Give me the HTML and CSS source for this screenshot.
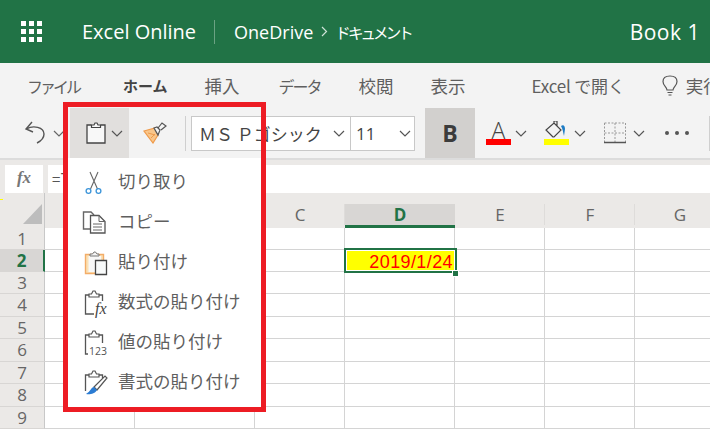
FILE: index.html
```html
<!DOCTYPE html>
<html lang="ja">
<head>
  <meta charset="UTF-8" />
  <title>Excel Online</title>
  <link rel="stylesheet" href="styles.css">
</head>
<body>
<div class="app">
  <header class="topbar">
    <div class="waffle">
      <i></i><i></i><i></i><i></i><i></i><i></i><i></i><i></i><i></i>
    </div>
    <span class="brand">Excel Online</span>
    <span class="top-sep"></span>
    <span class="crumb">OneDrive</span>
    <svg class="crumb-arrow" width="7" height="11" viewBox="0 0 7 11"><path d="M1 1l4.500 4.500L1 10" fill="none" stroke="#cfe3d8" stroke-width="1.200"/></svg>
    <span class="crumb crumb-jp">ドキュメント</span>
    <span class="book">Book 1</span>
  </header>

  <nav class="tabs">
    <span class="tab tab-file">ファイル</span>
    <span class="tab tab-home">ホーム</span>
    <span class="tab tab-insert">挿入</span>
    <span class="tab tab-data">データ</span>
    <span class="tab tab-review">校閲</span>
    <span class="tab tab-view">表示</span>
    <span class="tab tab-open">Excel で開く</span>
    <svg class="bulb" width="16" height="22" viewBox="0 0 16 22"><path d="M5 15c0-3-4-4-4-8.500C1 3 4 1 8 1s7 2 7 5.500C15 11 11 12 11 15zM5.500 17.500h5M6.500 20h3" fill="none" stroke="#555" stroke-width="1.200"/></svg>
    <span class="tab tab-tell">実行</span>
  </nav>

  <div class="toolbar">
    <svg class="undo" width="22" height="24" viewBox="0 0 22 24"><path d="M8 1L2 8l7 3M2.500 8C9 4 20 6 20 13c0 4-3 7-7 9" fill="none" stroke="#555" stroke-width="1.400"/></svg>
    <svg class="chev chev-undo" width="12" height="7" viewBox="0 0 12 7"><path d="M1 1l5 5 5-5" fill="none" stroke="#666" stroke-width="1.200"/></svg>
    <div class="paste-btn">
      <svg width="20" height="22" viewBox="0 0 20 22"><path d="M5.500 3H1v18h18V3h-4.500" fill="#f8f8f8" stroke="#444" stroke-width="1.300"/><path d="M5.500 5.500V3H8l1-2h2l1 2h2.500v2.500z" fill="#f8f8f8" stroke="#444" stroke-width="1.200"/></svg>
      <svg class="chev" width="12" height="7" viewBox="0 0 12 7"><path d="M1 1l5 5 5-5" fill="none" stroke="#555" stroke-width="1.200"/></svg>
    </div>
    <svg class="brush" width="24" height="22" viewBox="0 0 24 22"><path d="M1 9l11-3 3 7-5 8z" fill="#f9c68a" stroke="#ef9a4a" stroke-width="1.200"/><path d="M5 11l7 2M8 16l4-4" stroke="#ef9a4a" fill="none"/><path d="M11 6l3-1 3 3-2 5zM15 6l4-5 4 3-5 4" fill="#f4f4f4" stroke="#555" stroke-width="1.200"/></svg>
    <span class="tool-sep"></span>
    <div class="select select-font">
      <span>ＭＳ Ｐゴシック</span>
      <svg class="chev" width="12" height="7" viewBox="0 0 12 7"><path d="M1 1l5 5 5-5" fill="none" stroke="#555" stroke-width="1.200"/></svg>
    </div>
    <div class="select select-size">
      <span>11</span>
      <svg class="chev" width="12" height="7" viewBox="0 0 12 7"><path d="M1 1l5 5 5-5" fill="none" stroke="#555" stroke-width="1.200"/></svg>
    </div>
    <div class="bold-btn">B</div>
    <div class="color-tool color-font">
      <span class="letter-a">A</span>
      <span class="swatch swatch-red"></span>
    </div>
    <svg class="chev chev-font" width="12" height="7" viewBox="0 0 12 7"><path d="M1 1l5 5 5-5" fill="none" stroke="#555" stroke-width="1.200"/></svg>
    <div class="color-tool color-fill">
      <svg width="25" height="18" viewBox="0 0 25 18"><path d="M9 16L2 9l8-7 7 7-7 7zM10 2V0h3v6" fill="none" stroke="#444" stroke-width="1.200"/><path d="M17 5c3-2 4 1 4 3l-1 7c-1-3-1-7-3-10z" fill="#1e7cc4"/></svg>
      <span class="swatch swatch-yellow"></span>
    </div>
    <svg class="chev chev-fill" width="12" height="7" viewBox="0 0 12 7"><path d="M1 1l5 5 5-5" fill="none" stroke="#555" stroke-width="1.200"/></svg>
    <svg class="borders" width="22" height="22" viewBox="0 0 22 22"><path d="M.5 1h21M.5 1v19M21.500 1v19M11 1v19M.5 11h21" fill="none" stroke="#999" stroke-dasharray="2 1.500"/><path d="M0 20.500h22" stroke="#555" stroke-width="1.500"/></svg>
    <svg class="chev chev-borders" width="12" height="7" viewBox="0 0 12 7"><path d="M1 1l5 5 5-5" fill="none" stroke="#555" stroke-width="1.200"/></svg>
    <div class="more"><i></i><i></i><i></i></div>
    <span class="tool-sep tool-sep-end"></span>
  </div>

  <div class="formula-bar">
    <div class="fx-box">fx</div>
    <div class="formula-input">=下</div>
  </div>

  <div class="sheet">
    <div class="corner"><span class="corner-mark"></span></div>
    <div class="col-head"></div><div class="col-head"></div><div class="col-head">C</div><div class="col-head col-on">D</div><div class="col-head">E</div><div class="col-head">F</div><div class="col-head">G</div>

    <div class="row-head">1</div>
    <div class="cell"></div><div class="cell"></div><div class="cell"></div><div class="cell"></div><div class="cell"></div><div class="cell"></div><div class="cell"></div>
    <div class="row-head row-on">2</div>
    <div class="cell"></div><div class="cell"></div><div class="cell"></div>
    <div class="cell cell-active"><div class="cell-value">2019/1/24</div><span class="fill-handle"></span></div>
    <div class="cell"></div><div class="cell"></div><div class="cell"></div>
    <div class="row-head">3</div>
    <div class="cell"></div><div class="cell"></div><div class="cell"></div><div class="cell"></div><div class="cell"></div><div class="cell"></div><div class="cell"></div>
    <div class="row-head">4</div>
    <div class="cell"></div><div class="cell"></div><div class="cell"></div><div class="cell"></div><div class="cell"></div><div class="cell"></div><div class="cell"></div>
    <div class="row-head">5</div>
    <div class="cell"></div><div class="cell"></div><div class="cell"></div><div class="cell"></div><div class="cell"></div><div class="cell"></div><div class="cell"></div>
    <div class="row-head">6</div>
    <div class="cell"></div><div class="cell"></div><div class="cell"></div><div class="cell"></div><div class="cell"></div><div class="cell"></div><div class="cell"></div>
    <div class="row-head">7</div>
    <div class="cell"></div><div class="cell"></div><div class="cell"></div><div class="cell"></div><div class="cell"></div><div class="cell"></div><div class="cell"></div>
    <div class="row-head">8</div>
    <div class="cell"></div><div class="cell"></div><div class="cell"></div><div class="cell"></div><div class="cell"></div><div class="cell"></div><div class="cell"></div>
    <div class="row-head">9</div>
    <div class="cell"></div><div class="cell"></div><div class="cell"></div><div class="cell"></div><div class="cell"></div><div class="cell"></div><div class="cell"></div>
  </div>

  <div class="paste-menu">
    <div class="menu-item">
      <svg width="28" height="34" viewBox="0 -3 28 34"><path d="M10 5l7.500 17M18 5l-7.500 17" fill="none" stroke="#666" stroke-width="1.100"/><circle cx="8.500" cy="24" r="2.400" fill="none" stroke="#3b94d9" stroke-width="1.300"/><circle cx="18.500" cy="24" r="2.400" fill="none" stroke="#3b94d9" stroke-width="1.300"/></svg>
      <span>切り取り</span>
    </div>
    <div class="menu-item">
      <svg width="28" height="34" viewBox="0 -3 28 34"><path d="M10 22H3.500V5H11l3 3" fill="none" stroke="#666" stroke-width="1.400"/><path d="M10.500 8.500H19l6 6V26H10.500z" fill="#fff" stroke="#555" stroke-width="1.300"/><path d="M19 8.500v6h6M13 17h9M13 20h9M13 23h9" fill="none" stroke="#666"/></svg>
      <span>コピー</span>
    </div>
    <div class="menu-item">
      <svg width="28" height="34" viewBox="0 -3 28 34"><path d="M5.500 7.500h18v19h-18z" fill="#fbe1b5" stroke="#f3ad68" stroke-width="1.400"/><path d="M8.500 9V25h7V13H21V9z" fill="#f8f8f8"/><path d="M10 9V7h2.500l1.500-2h1.500l1.500 2H19v2z" fill="#f4f4f4" stroke="#777"/><path d="M15.500 13.500h11v14h-11z" fill="#f8fafa" stroke="#444" stroke-width="1.300"/></svg>
      <span>貼り付け</span>
    </div>
    <div class="menu-item">
      <svg width="28" height="34" viewBox="0 -3 28 34"><path d="M9 8H5.500v19H14M19 8h3.500v6" fill="none" stroke="#555" stroke-width="1.300"/><path d="M9 10V7h2.500L13 4h2l1.500 3H19v3z" fill="#fff" stroke="#555" stroke-width="1.200"/><text class="icon-fx" x="15" y="27">fx</text></svg>
      <span>数式の貼り付け</span>
    </div>
    <div class="menu-item">
      <svg width="28" height="34" viewBox="0 -3 28 34"><path d="M9 8H5.500v19H8M19 8h3.500v8" fill="none" stroke="#555" stroke-width="1.300"/><path d="M9 10V7h2.500L13 4h2l1.500 3H19v3z" fill="#fff" stroke="#555" stroke-width="1.200"/><text class="icon-num" x="9" y="28">123</text></svg>
      <span>値の貼り付け</span>
    </div>
    <div class="menu-item">
      <svg width="28" height="34" viewBox="0 -3 28 34"><path d="M9 8H5.500v16M19 8h3.500v3" fill="none" stroke="#555" stroke-width="1.300"/><path d="M9 10V7h2.500L13 4h2l1.500 3H19v3z" fill="#fff" stroke="#555" stroke-width="1.200"/><path d="M14 20L25 9l2 2-10 12z" fill="#fff" stroke="#555" stroke-width="1.200"/><path d="M6 27c3 1 9 0 11-4l-3-3c-3 0-3 4-8 7z" fill="#2b7cd3"/></svg>
      <span>書式の貼り付け</span>
    </div>
  </div>
  <div class="red-frame"></div>
  <span class="stray-mark"></span>
</div>
</body>
</html>
```

FILE: styles.css
```css
* {
  box-sizing: border-box;
}

body {
  margin: 0;
  font-family: "Noto Sans CJK JP", sans-serif;
  color: #555;
}

.app {
  position: relative;
  width: 710px;
  height: 429px;
  overflow: hidden;
  background: #fff;
}

/* green title bar */
.topbar {
  display: flex;
  align-items: center;
  height: 63px;
  padding-left: 21px;
  background: #217346;
  color: #fff;
  font-family: "Open Sans", "Noto Sans CJK JP", sans-serif;
}

.waffle {
  display: grid;
  grid-template-columns: repeat(3, 5px);
  grid-auto-rows: 5px;
  gap: 3px;
  margin-right: 40px;
}

.waffle i {
  background: #fff;
}

.brand {
  font-size: 20px;
}

.top-sep {
  width: 1px;
  height: 24px;
  margin: 0 19px 0 18px;
  background: #6ba283;
}

.crumb {
  font-size: 18px;
}

.crumb-arrow {
  margin: 0 7px 0 8px;
}

.crumb-jp {
  font-family: "Noto Sans CJK JP", sans-serif;
  font-size: 15.500px;
  letter-spacing: -2.900px;
}

.book {
  margin-left: auto;
  margin-right: 10px;
  font-size: 21px;
  letter-spacing: 0.5px;
}

/* ribbon tabs */
.tabs {
  display: flex;
  align-items: center;
  height: 45px;
  background: #f3f3f3;
  font-size: 17.500px;
  white-space: nowrap;
  overflow: hidden;
}

.tab {
  flex: none;
  color: #5f5f5f;
}

.tab-file {
  margin-left: 27px;
  font-size: 16px;
  letter-spacing: -3px;
}

.tab-home {
  margin-left: 44px;
  font-size: 15px;
  font-weight: 700;
  color: #444;
}

.tab-insert {
  margin-left: 37px;
}

.tab-data {
  margin-left: 39px;
  font-size: 16px;
  letter-spacing: -2px;
}

.tab-review {
  margin-left: 38px;
}

.tab-view {
  margin-left: 37px;
}

.tab-open {
  margin-left: 66px;
  font-size: 17px;
  letter-spacing: -0.2px;
}

.bulb {
  flex: none;
  margin-left: 37px;
}

.tab-tell {
  margin-left: 8px;
}

/* ribbon commands */
.toolbar {
  display: flex;
  align-items: center;
  height: 50px;
  padding-left: 24px;
  background: #f3f3f3;
}

.chev {
  flex: none;
}

.undo {
  flex: none;
}

.chev-undo {
  margin-left: 7px;
}

.paste-btn {
  display: flex;
  align-items: center;
  gap: 5px;
  width: 61px;
  height: 50px;
  margin-left: 5px;
  padding-left: 16px;
  background: #e1dfdd;
}

.brush {
  flex: none;
  margin-left: 14px;
}

.tool-sep {
  flex: none;
  width: 1px;
  height: 35px;
  margin-left: 18px;
  background: #cfcfcf;
}

.select {
  display: flex;
  flex: none;
  align-items: center;
  justify-content: space-between;
  height: 35px;
  background: #fff;
  border: 1px solid #c8c8c8;
  color: #444;
  white-space: nowrap;
}

.select-font {
  width: 160px;
  margin-left: 5px;
  padding: 0 5px 0 7px;
  font-size: 17px;
}

.select-size {
  width: 65px;
  margin-left: -1px;
  padding: 0 3px 0 5px;
  font-family: "Open Sans", sans-serif;
  font-size: 17px;
}

.bold-btn {
  flex: none;
  width: 50px;
  height: 50px;
  margin-left: 10px;
  background: #d2d0ce;
  color: #3c3c3c;
  font-family: "Open Sans", sans-serif;
  font-size: 23px;
  font-weight: 700;
  line-height: 50px;
  text-align: center;
}

.color-tool {
  display: flex;
  flex: none;
  flex-direction: column;
  align-items: center;
  justify-content: flex-end;
  width: 25px;
  height: 50px;
  padding-bottom: 13px;
}

.color-font {
  margin-left: 11px;
}

.letter-a {
  height: 18px;
  color: #444;
  font-family: "Open Sans", sans-serif;
  font-size: 23px;
  font-weight: 300;
  line-height: 18px;
}

.swatch {
  width: 25px;
  height: 6px;
}

.swatch-red {
  background: #f00;
}

.swatch-yellow {
  background: #ff0;
}

.chev-font {
  margin-left: 4px;
}

.color-fill {
  margin-left: 17px;
}

.chev-fill {
  margin-left: 5px;
}

.borders {
  flex: none;
  margin-left: 18px;
}

.chev-borders {
  margin-left: 7px;
}

.more {
  display: flex;
  flex: none;
  gap: 6px;
  margin-left: 20px;
}

.more i {
  width: 4px;
  height: 4px;
  border-radius: 50%;
  background: #555;
}

.tool-sep-end {
  margin-left: 20px;
}

/* formula bar */
.formula-bar {
  display: flex;
  gap: 5px;
  height: 35px;
  padding: 5px 0 0 5px;
  background: #ebe9e7;
  border-top: 2px solid #dcdcdc;
}

.fx-box {
  width: 38px;
  height: 28px;
  background: #fff;
  color: #777;
  font-family: "Liberation Serif", serif;
  font-size: 17px;
  font-style: italic;
  font-weight: 700;
  line-height: 26px;
  text-align: center;
}

.formula-input {
  flex: 1;
  height: 28px;
  padding-left: 4px;
  background: #fff;
  font-size: 15px;
  line-height: 28px;
}

/* worksheet */
.sheet {
  display: grid;
  grid-template-columns: 45px 90px 120px 90px 110px 90px 90px 90px;
  grid-template-rows: 35px 22px 22px 22px 23px 22px 23px 22px 23px 22px;
  background: #fff;
  font-family: "Open Sans", sans-serif;
}

.corner {
  position: relative;
  background: #ebe9e7;
  border-right: 1px solid #c8c8c8;
}

.corner-mark {
  position: absolute;
  top: 11px;
  left: 23px;
  width: 19px;
  height: 20px;
  background: #bdbdbd;
  clip-path: polygon(100% 0, 100% 100%, 0 100%);
}

.col-head {
  padding-top: 11px;
  background: linear-gradient(#dedcda, #dedcda) right 11px / 1px 21px no-repeat #ebe9e7;
  color: #666;
  font-size: 17px;
  line-height: 22px;
  text-align: center;
}

.col-on {
  background: linear-gradient(#ebe9e7 11px, #d8d6d4 11px);
  border-bottom: 3px solid #217346;
  color: #217346;
  font-weight: 700;
}

.row-head {
  background: #ebe9e7;
  border-right: 1px solid #c8c8c8;
  border-bottom: 1px solid #d8d6d4;
  color: #666;
  font-size: 17px;
  line-height: 21px;
  text-align: center;
}

.row-on {
  background: #d8d6d4;
  border-right: 2px solid #217346;
  color: #217346;
  font-weight: 700;
}

.cell {
  border-right: 1px solid #d4d4d4;
  border-bottom: 1px solid #d4d4d4;
}

.cell-active {
  position: relative;
}

.cell-value {
  position: absolute;
  top: -2px;
  left: -1px;
  width: 113px;
  height: 25px;
  padding-right: 2px;
  background: #ff0;
  border: 2px solid #217346;
  box-shadow: inset 0 0 0 1px #fff;
  color: #f00;
  font-family: "Liberation Sans", sans-serif;
  font-size: 18px;
  line-height: 24px;
  letter-spacing: 0.4px;
  text-align: right;
}

.fill-handle {
  position: absolute;
  top: 20px;
  left: 107px;
  width: 7px;
  height: 7px;
  background: #217346;
  border: 1px solid #fff;
}

/* paste dropdown, sits over the sheet */
.paste-menu {
  position: absolute;
  top: 158px;
  left: 68px;
  width: 193px;
  height: 249px;
  padding-top: 3px;
  background: #fff;
}

.menu-item {
  display: flex;
  align-items: center;
  gap: 10px;
  height: 40px;
  padding-left: 12px;
  color: #5f5f5f;
  font-size: 17.500px;
  line-height: 38px;
  white-space: nowrap;
}

.menu-item span {
  margin-top: -1px;
}

.menu-item svg {
  flex: none;
}

.icon-fx {
  fill: #444;
  font-family: "Liberation Serif", serif;
  font-size: 16px;
  font-style: italic;
}

.icon-num {
  fill: #555;
  font-family: "Open Sans", sans-serif;
  font-size: 10.500px;
}

/* red annotation */
.red-frame {
  position: absolute;
  top: 102px;
  left: 63px;
  width: 203px;
  height: 310px;
  border: 5px solid #ed1c24;
}

.stray-mark {
  position: absolute;
  top: 199px;
  left: 0;
  width: 3px;
  height: 1px;
  background: #ff0;
}
```
